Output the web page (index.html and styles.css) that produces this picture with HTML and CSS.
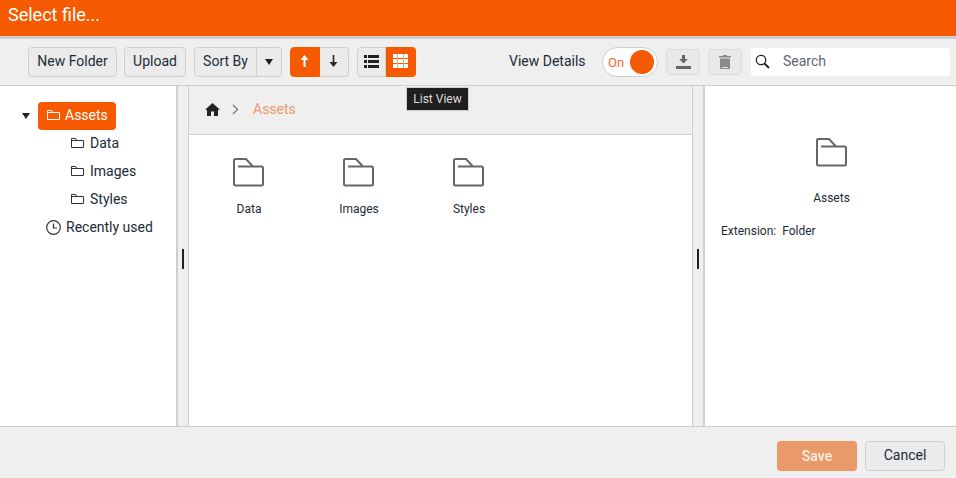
FILE: index.html
```html
<!DOCTYPE html>
<html>
<head>
  <title>Select file</title>
  <link rel="stylesheet" href="styles.css">
</head>
<body>

<div class="dialog">
  <div class="title-bar">Select file...</div>

  <div class="toolbar">
    <button class="btn btn-new">New Folder</button>
    <button class="btn btn-upload">Upload</button>
    <div class="btn-group group-sort">
      <button class="btn sort-label">Sort By</button>
      <button class="btn sort-caret"><span class="caret"></span></button>
    </div>
    <div class="btn-group group-dir">
      <button class="btn active">
        <svg width="9" height="12" viewBox="0 0 9 12"><path d="M4.500 0 8.500 5H5.500v7h-2V5H.5z" fill="#fff"/></svg>
      </button>
      <button class="btn">
        <svg width="9" height="12" viewBox="0 0 9 12"><path d="M4.500 12 .5 7h3.200V0h1.600v7h3.200z" fill="#2b2b2b"/></svg>
      </button>
    </div>
    <div class="btn-group group-view">
      <button class="btn">
        <svg width="15" height="13" viewBox="0 0 15 13"><path d="M0 0h3v3H0zM4 0h11v3H4zM0 5h3v3H0zM4 5h11v3H4zM0 10h3v3H0zM4 10h11v3H4z" fill="#222"/></svg>
      </button>
      <button class="btn active">
        <svg width="15" height="14" viewBox="0 0 15 14"><path d="M0 0h15v4H0zM0 5h15v4H0zM0 10h15v4H0z" fill="#fff"/><path d="M4.500 0v14M10.500 0v14" stroke="#f9a873"/></svg>
      </button>
    </div>

    <span class="details-label">View Details</span>
    <div class="switch">
      <span class="switch-text">On</span>
      <span class="switch-knob"></span>
    </div>
    <button class="btn btn-icon btn-download">
      <svg width="15" height="14" viewBox="0 0 15 14"><path d="M6 0h3v4h2.800l-4.300 4.500L3.200 4H6zM0 11h15v3H0z" fill="#666"/></svg>
    </button>
    <button class="btn btn-icon btn-trash">
      <svg width="12" height="14" viewBox="0 0 12 14"><path d="M4 0h4v1h4v1.500H0V1h4zM1 3.500h10V13a1 1 0 0 1-1 1H2a1 1 0 0 1-1-1z" fill="#8a8a8a"/><path d="M3 12.500h6" stroke="#e9e9e9"/></svg>
    </button>
    <div class="search">
      <svg class="search-icon" width="15" height="15" viewBox="0 0 15 15"><circle cx="6" cy="6" r="4.700" fill="none" stroke="#222" stroke-width="1.300"/><path d="M9.500 9.500 14 14" stroke="#222" stroke-width="2"/></svg>
      <span class="search-text">Search</span>
    </div>
  </div>

  <div class="panes">
    <div class="tree">
      <div class="tree-row">
        <span class="tree-toggle"></span>
        <span class="tree-node selected">
          <svg class="tree-icon" width="13" height="12" viewBox="0 0 13 12"><path d="M.5 10.500v-9h4l1.500 2h6.500v7zM.5 3.500H6" fill="none" stroke="#fff"/></svg>
          Assets
        </span>
      </div>
      <div class="tree-row child">
        <span class="tree-node">
          <svg class="tree-icon" width="13" height="12" viewBox="0 0 13 12"><path d="M.5 10.500v-9h4l1.500 2h6.500v7zM.5 3.500H6" fill="none" stroke="#2b3340"/></svg>
          Data
        </span>
      </div>
      <div class="tree-row child">
        <span class="tree-node">
          <svg class="tree-icon" width="13" height="12" viewBox="0 0 13 12"><path d="M.5 10.500v-9h4l1.500 2h6.500v7zM.5 3.500H6" fill="none" stroke="#2b3340"/></svg>
          Images
        </span>
      </div>
      <div class="tree-row child">
        <span class="tree-node">
          <svg class="tree-icon" width="13" height="12" viewBox="0 0 13 12"><path d="M.5 10.500v-9h4l1.500 2h6.500v7zM.5 3.500H6" fill="none" stroke="#2b3340"/></svg>
          Styles
        </span>
      </div>
      <div class="tree-row recent">
        <span class="tree-node">
          <svg class="tree-icon" width="15" height="15" viewBox="0 0 15 15"><circle cx="7.500" cy="7.500" r="6.800" fill="none" stroke="#2b3340" stroke-width="1.200"/><path d="M7.500 3.500v4.500H11" fill="none" stroke="#2b3340" stroke-width="1.200"/></svg>
          Recently used
        </span>
      </div>
    </div>

    <div class="splitter"><span class="grip"></span></div>

    <div class="content">
      <div class="crumbs">
        <svg width="15" height="13" viewBox="0 0 15 13"><path d="M7.500 0 15 6.800h-2V13H9V8.500H6V13H2V6.800H0z" fill="#222"/></svg>
        <svg class="crumb-sep" width="7" height="11" viewBox="0 0 7 11"><path d="M1 1l4.500 4.500L1 10" fill="none" stroke="#777" stroke-width="1.300"/></svg>
        <span class="crumb-link">Assets</span>
      </div>
      <div class="files">
        <div class="file">
          <svg class="folder" width="31" height="29" viewBox="0 0 31 29"><path d="M5 8.500h23.500a1.500 1.500 0 0 1 1.500 1.500v16a1.500 1.500 0 0 1-1.500 1.500h-26A1.500 1.500 0 0 1 1 26V2.500A1.500 1.500 0 0 1 2.500 1H13l6.500 7" fill="none" stroke="#666" stroke-width="2"/></svg>
          <span class="file-name">Data</span>
        </div>
        <div class="file">
          <svg class="folder" width="31" height="29" viewBox="0 0 31 29"><path d="M5 8.500h23.500a1.500 1.500 0 0 1 1.500 1.500v16a1.500 1.500 0 0 1-1.500 1.500h-26A1.500 1.500 0 0 1 1 26V2.500A1.500 1.500 0 0 1 2.500 1H13l6.500 7" fill="none" stroke="#666" stroke-width="2"/></svg>
          <span class="file-name">Images</span>
        </div>
        <div class="file">
          <svg class="folder" width="31" height="29" viewBox="0 0 31 29"><path d="M5 8.500h23.500a1.500 1.500 0 0 1 1.500 1.500v16a1.500 1.500 0 0 1-1.500 1.500h-26A1.500 1.500 0 0 1 1 26V2.500A1.500 1.500 0 0 1 2.500 1H13l6.500 7" fill="none" stroke="#666" stroke-width="2"/></svg>
          <span class="file-name">Styles</span>
        </div>
      </div>
    </div>

    <div class="splitter splitter-right"><span class="grip"></span></div>

    <div class="details">
      <div class="details-head">
        <svg class="folder" width="31" height="29" viewBox="0 0 31 29"><path d="M5 8.500h23.500a1.500 1.500 0 0 1 1.500 1.500v16a1.500 1.500 0 0 1-1.500 1.500h-26A1.500 1.500 0 0 1 1 26V2.500A1.500 1.500 0 0 1 2.500 1H13l6.500 7" fill="none" stroke="#666" stroke-width="2"/></svg>
        <span class="file-name">Assets</span>
      </div>
      <div class="details-row">
        <span class="details-key">Extension:</span>
        <span>Folder</span>
      </div>
    </div>
  </div>

  <div class="footer">
    <button class="btn-save">Save</button>
    <button class="btn btn-cancel">Cancel</button>
  </div>

  <div class="tooltip">List View</div>
</div>

</body>
</html>
```

FILE: styles.css
```css
* {
  box-sizing: border-box;
}

body {
  margin: 0;
  font-family: Roboto, "Liberation Sans", sans-serif;
  font-size: 14px;
  color: #212b36;
}

.dialog {
  position: relative;
  display: flex;
  flex-direction: column;
  width: 956px;
  height: 478px;
  overflow: hidden;
  background: #fff;
}

/* Title */
.title-bar {
  height: 39px;
  padding: 4px 8px 0;
  border-bottom: 3px solid #cdcdcd;
  background: #f65a00;
  color: #fff;
  font-size: 18px;
  line-height: 21px;
}

/* Toolbar */
.toolbar {
  display: flex;
  align-items: center;
  height: 47px;
  padding-left: 28px;
  border-bottom: 1px solid #cfcfcf;
  background: #efefef;
}

.btn {
  display: inline-flex;
  align-items: center;
  justify-content: center;
  height: 30px;
  padding: 0 0 2px;
  border: 1px solid #cfcfcf;
  border-radius: 4px;
  background: #ebebeb;
  color: #212b36;
  font: inherit;
}

.btn-new {
  width: 89px;
}

.btn-upload {
  width: 62px;
  margin-left: 7px;
}

.btn-group {
  display: flex;
}

.btn-group .btn {
  width: 30px;
  border-radius: 0;
}

.btn-group .btn:first-child {
  border-radius: 4px 0 0 4px;
}

.btn-group .btn:last-child {
  border-left: none;
  border-radius: 0 4px 4px 0;
}

.btn-group .btn.active {
  border-color: #f65a00;
  background: #f65a00;
}

.group-sort {
  margin-left: 8px;
}

.btn-group .sort-label {
  width: 63px;
}

.btn-group .sort-caret {
  width: 25px;
  padding-bottom: 0;
  border-left: 1px solid #cfcfcf;
}

.caret {
  border-top: 6px solid #222;
  border-left: 4px solid transparent;
  border-right: 4px solid transparent;
}

.group-dir,
.group-view {
  margin-left: 8px;
}

.group-dir .btn {
  padding-right: 2px;
}

.group-dir .btn:last-child {
  width: 29px;
}

.group-view .btn:first-child {
  width: 29px;
}

.details-label {
  width: 93px;
  margin-left: 93px;
  padding-bottom: 2px;
}

.switch {
  display: flex;
  align-items: center;
  justify-content: space-between;
  width: 56px;
  height: 30px;
  padding: 0 3px 0 5px;
  border: 1px solid #cfcfcf;
  border-radius: 15px;
  background: #fff;
}

.switch-text {
  color: #f0692a;
  font-size: 13px;
}

.switch-knob {
  width: 24px;
  height: 24px;
  border-radius: 50%;
  background: #f65a00;
}

.btn-icon {
  width: 34px;
  height: 26px;
  padding-bottom: 0;
  border-color: #dcdcdc;
  background: #e9e9e9;
}

.btn-download {
  margin-left: 8px;
}

.btn-trash {
  margin-left: 8px;
}

.search {
  display: flex;
  align-items: center;
  width: 199px;
  height: 28px;
  margin-left: 9px;
  padding-left: 4px;
  border-radius: 3px;
  background: #fff;
}

.search-icon {
  margin-bottom: 2px;
}

.search-text {
  margin-left: 13px;
  padding-bottom: 2px;
  color: #5f6670;
}

/* Panes */
.panes {
  display: flex;
  flex: 1;
  min-height: 0;
}

.tree {
  flex: none;
  width: 176px;
  padding-top: 16px;
}

.tree-row {
  display: flex;
  align-items: center;
  height: 28px;
}

.tree-row.child {
  padding-left: 71px;
}

.tree-row.recent {
  padding-left: 46px;
}

.tree-toggle {
  width: 0;
  height: 0;
  margin-left: 22px;
  border-top: 6px solid #222;
  border-left: 4px solid transparent;
  border-right: 4px solid transparent;
}

.tree-node {
  display: inline-flex;
  align-items: center;
  gap: 6px;
  padding-bottom: 2px;
}

.tree-node.selected {
  gap: 5px;
  height: 28px;
  margin-left: 8px;
  padding: 0 8px 2px 9px;
  border-radius: 4px;
  background: #f65a00;
  color: #fff;
}

.recent .tree-node {
  gap: 5px;
}

.splitter {
  display: flex;
  flex: none;
  align-items: center;
  justify-content: center;
  width: 13px;
  padding-top: 6px;
  border-left: 2px solid #cfcfcf;
  border-right: 1px solid #cfcfcf;
  background: #efefef;
}

.splitter-right {
  border-left-width: 1px;
  border-right-width: 2px;
}

.grip {
  width: 2px;
  height: 20px;
  background: #222;
}

.content {
  display: flex;
  flex: none;
  flex-direction: column;
  width: 503px;
}

.crumbs {
  display: flex;
  align-items: center;
  height: 49px;
  padding: 0 0 2px 16px;
  border-bottom: 1px solid #cfcfcf;
  background: #efefef;
}

.crumb-sep {
  margin-left: 12px;
}

.crumb-link {
  margin-left: 14px;
  color: #eb9a69;
}

.files {
  display: flex;
  padding-top: 23px;
  padding-left: 5px;
}

.file {
  display: flex;
  flex-direction: column;
  align-items: center;
  width: 110px;
}

.file .folder {
  margin-right: 2px;
}

.file-name {
  margin-top: 15px;
  font-size: 12px;
  line-height: 14px;
}

.details {
  flex: 1;
  min-width: 0;
  padding-top: 52px;
}

.details-head {
  display: flex;
  flex-direction: column;
  align-items: center;
  padding-left: 2px;
}

.details-head .file-name {
  margin-top: 24px;
}

.details-row {
  margin-top: 19px;
  padding-left: 16px;
  font-size: 12px;
  line-height: 14px;
}

.details-key {
  margin-right: 3px;
}

/* Footer */
.footer {
  display: flex;
  justify-content: flex-end;
  align-items: flex-end;
  gap: 8px;
  height: 52px;
  padding: 0 11px 7px 0;
  border-top: 1px solid #cfcfcf;
  background: #efefef;
}

.btn-save {
  width: 80px;
  height: 30px;
  border: none;
  border-radius: 4px;
  background: #ea9a69;
  color: #fdeee4;
  font: inherit;
  font-weight: 500;
}

.btn-cancel {
  width: 80px;
}

/* Hover label over the view buttons */
.tooltip {
  position: absolute;
  left: 406px;
  top: 87px;
  width: 63px;
  height: 24px;
  border: 1px solid #cfcfcf;
  background: #1f1f1f;
  color: #ddd;
  font-size: 12px;
  line-height: 22px;
  text-align: center;
}
```
